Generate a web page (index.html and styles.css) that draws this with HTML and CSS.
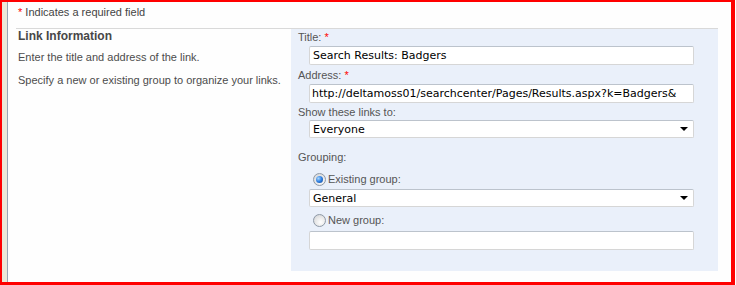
FILE: index.html
```html
<!DOCTYPE html>
<html>
<head>
<meta charset="utf-8">
<link rel="stylesheet" href="styles.css">
</head>
<body>
<div class="frame">
  <div class="gutter"></div>
  <div class="content">
    <div class="required-note"><span class="req">*</span> Indicates a required field</div>
    <div class="section">
      <div class="desc">
        <div class="desc-title">Link Information</div>
        <p class="desc-text first">Enter the title and address of the link.</p>
        <p class="desc-text">Specify a new or existing group to organize your links.</p>
      </div>
      <div class="panel">
        <div class="label l-title">Title: <span class="req">*</span></div>
        <div class="field f-title"><span class="value">Search Results: Badgers</span></div>
        <div class="label l-address">Address: <span class="req">*</span></div>
        <div class="field f-address"><span class="value">http://deltamoss01/searchcenter/Pages/Results.aspx?k=Badgers&amp;</span></div>
        <div class="label l-show">Show these links to:</div>
        <div class="field select f-show"><span class="value">Everyone</span><span class="arrow"></span></div>
        <div class="label l-group">Grouping:</div>
        <div class="radio-row r-existing"><span class="radio checked"></span><span class="radio-label">Existing group:</span></div>
        <div class="field select f-general"><span class="value">General</span><span class="arrow"></span></div>
        <div class="radio-row r-new"><span class="radio"></span><span class="radio-label">New group:</span></div>
        <div class="field f-new"></div>
      </div>
    </div>
  </div>
</div>
</body>
</html>
```
FILE: styles.css
```css
html, body {
  margin: 0;
  padding: 0;
  background: #ffffff;
}
body {
  width: 736px;
  height: 285px;
  overflow: hidden;
  font-family: "Liberation Sans", Arial, sans-serif;
  font-size: 11px;
  color: #555555;
}
.frame {
  box-sizing: border-box;
  width: 735px;
  height: 285px;
  border-style: solid;
  border-color: #ff0000;
  border-width: 2px 4px 3px 2px;
  display: flex;
  background: #fefefe;
}
.gutter {
  width: 5px;
  background: #ece9d8;
  border-right: 1px solid #9aa6b4;
  flex: none;
}
.content {
  flex: 1;
  display: flex;
  flex-direction: column;
  padding-left: 8px;
}
.req {
  color: #ff0000;
}
.required-note {
  height: 26px;
  line-height: 20px;
  padding-left: 2px;
  color: #444;
}
.section {
  width: 702px;
  border-top: 1px solid #d9d9d9;
  display: flex;
  align-items: flex-start;
}
.desc {
  width: 275px;
  flex: none;
  padding-left: 2px;
  box-sizing: border-box;
}
.desc-title {
  font-weight: bold;
  font-size: 12px;
  color: #474747;
  line-height: 15px;
  margin-top: 0px;
}
.desc-text {
  margin: 0;
  line-height: 14px;
  color: #4c4c4c;
}
.desc-text.first {
  margin-top: 6px;
}
.desc-text + .desc-text {
  margin-top: 9px;
}
.panel {
  width: 427px;
  background: #eaf0fa;
  padding: 1px 24px 21px 7px;
  box-sizing: border-box;
  display: flex;
  flex-direction: column;
}
.label {
  height: 14px;
  line-height: 15px;
  color: #555555;
}
.field {
  margin-left: 11px;
  box-sizing: border-box;
  height: 19px;
  background: #ffffff;
  border: 1px solid #d6d6d6;
  border-top-color: #bcc3cc;
  border-radius: 2px;
  display: flex;
  align-items: center;
  padding-left: 3px;
  font-family: "DejaVu Sans", Verdana, sans-serif;
  font-size: 11px;
  color: #000000;
  white-space: nowrap;
  overflow: hidden;
}
.select {
  height: 18px;
  justify-content: space-between;
  padding-right: 5px;
}
.arrow {
  width: 0;
  height: 0;
  border-left: 4px solid transparent;
  border-right: 4px solid transparent;
  border-top: 4px solid #000;
}
.f-title { margin-top: 2px; }
.l-address { margin-top: 3px; }
.f-address { margin-top: 2px; padding-left: 2px; }
.l-show { margin-top: 2px; }
.f-show { margin-top: 1px; }
.l-group { margin-top: 12px; }
.r-existing { margin-top: 8px; }
.f-general { margin-top: 3px; }
.r-new { margin-top: 6px; }
.f-new { margin-top: 4px; }
.radio-row {
  height: 14px;
  display: flex;
  align-items: center;
  margin-left: 15px;
}
.radio {
  width: 13px;
  height: 13px;
  box-sizing: border-box;
  border-radius: 50%;
  border: 1px solid #8e99a6;
  background: radial-gradient(circle at 60% 65%, #ffffff 0%, #e6e6e6 55%, #c9ccd2 100%);
  position: relative;
  flex: none;
}
.radio.checked::after {
  content: "";
  position: absolute;
  left: 2px;
  top: 2px;
  width: 7px;
  height: 7px;
  border-radius: 50%;
  background: radial-gradient(circle at 35% 35%, #a6d7ff 0%, #2f7fe0 50%, #11408f 100%);
}
.radio-label {
  margin-left: 2px;
  color: #555555;
}
```
